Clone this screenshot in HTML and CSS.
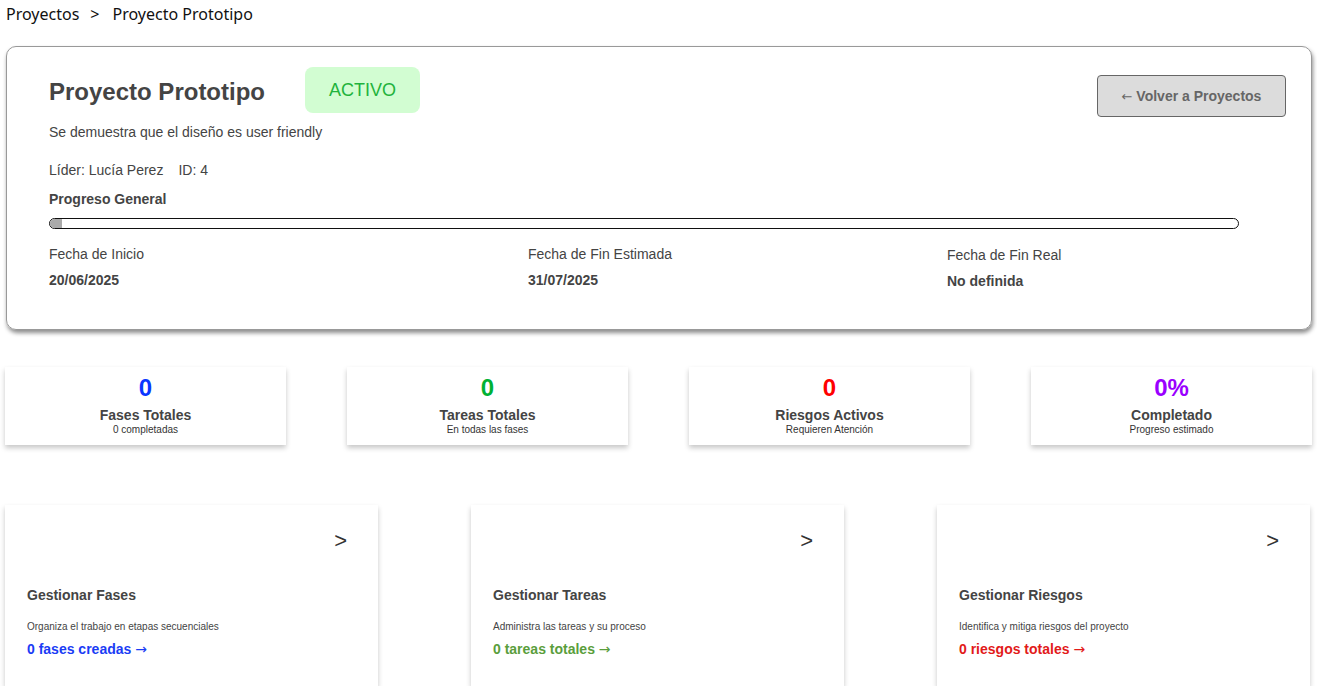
FILE: index.html
```html
<!DOCTYPE html>
<html lang="es">
<head>
<meta charset="utf-8">
<title>Proyecto Prototipo</title>
<link rel="stylesheet" href="styles.css">
</head>
<body>
<div class="page">
  <nav class="breadcrumb"><span>Proyectos</span><span class="sep">&gt;</span><span>Proyecto Prototipo</span></nav>

  <section class="project-card">
    <div class="header-row">
      <div class="title-group">
        <h1 class="title">Proyecto Prototipo</h1>
        <span class="badge">ACTIVO</span>
      </div>
      <button class="back-btn"><span class="arr">←</span> Volver a Proyectos</button>
    </div>
    <p class="desc">Se demuestra que el diseño es user friendly</p>
    <p class="meta"><span>Líder: Lucía Perez</span><span class="id">ID: 4</span></p>
    <p class="progress-label">Progreso General</p>
    <div class="progress"><div class="progress-fill" style="width: 1%"></div></div>
    <div class="dates">
      <div class="date-col">
        <div class="date-label">Fecha de Inicio</div>
        <div class="date-value">20/06/2025</div>
      </div>
      <div class="date-col">
        <div class="date-label">Fecha de Fin Estimada</div>
        <div class="date-value">31/07/2025</div>
      </div>
      <div class="date-col date-col-last">
        <div class="date-label">Fecha de Fin Real</div>
        <div class="date-value">No definida</div>
      </div>
    </div>
  </section>

  <section class="stats">
    <div class="stat">
      <div class="stat-num blue">0</div>
      <div class="stat-label">Fases Totales</div>
      <div class="stat-sub">0 completadas</div>
    </div>
    <div class="stat">
      <div class="stat-num green">0</div>
      <div class="stat-label">Tareas Totales</div>
      <div class="stat-sub">En todas las fases</div>
    </div>
    <div class="stat">
      <div class="stat-num red">0</div>
      <div class="stat-label">Riesgos Activos</div>
      <div class="stat-sub">Requieren Atención</div>
    </div>
    <div class="stat">
      <div class="stat-num purple">0%</div>
      <div class="stat-label">Completado</div>
      <div class="stat-sub">Progreso estimado</div>
    </div>
  </section>

  <section class="actions">
    <div class="action">
      <div class="action-arrow">&gt;</div>
      <div class="action-title">Gestionar Fases</div>
      <div class="action-desc">Organiza el trabajo en etapas secuenciales</div>
      <div class="action-link link-blue">0 fases creadas <span class="arr">→</span></div>
    </div>
    <div class="action">
      <div class="action-arrow">&gt;</div>
      <div class="action-title">Gestionar Tareas</div>
      <div class="action-desc">Administra las tareas y su proceso</div>
      <div class="action-link link-green">0 tareas totales <span class="arr">→</span></div>
    </div>
    <div class="action">
      <div class="action-arrow">&gt;</div>
      <div class="action-title">Gestionar Riesgos</div>
      <div class="action-desc">Identifica y mitiga riesgos del proyecto</div>
      <div class="action-link link-red">0 riesgos totales <span class="arr">→</span></div>
    </div>
  </section>
</div>
</body>
</html>
```

FILE: styles.css
```css
* { box-sizing: border-box; }

html, body {
  margin: 0;
  padding: 0;
  background: #fff;
}

body {
  font-family: "Liberation Sans", Arial, sans-serif;
  color: #444;
}

.page {
  padding: 0 5px 0 5px;
  width: 1317px;
}

.breadcrumb {
  font-family: "Noto Sans", "Open Sans", sans-serif;
  font-size: 16px;
  line-height: 22px;
  color: #111;
  padding: 3px 0 0 1px;
  height: 46px;
  display: flex;
}
.breadcrumb .sep { margin: 0 13px 0 11px; }

.project-card {
  margin-left: 1px;
  border: 1px solid #999;
  border-radius: 10px;
  box-shadow: 1px 3px 4px rgba(0, 0, 0, 0.45);
  padding: 20px 25px 40px 42px;
  height: 284px;
}

.header-row {
  display: flex;
  justify-content: space-between;
  align-items: flex-start;
}

.title-group {
  display: flex;
  align-items: center;
  height: 46px;
}

.title {
  margin: 4px 0 0 0;
  font-size: 24px;
  line-height: 28px;
  font-weight: bold;
  color: #444;
}

.badge {
  margin-left: 40px;
  background: #d2fdd2;
  color: #1fb33c;
  font-size: 18px;
  line-height: 22px;
  padding: 12px 24px;
  border-radius: 8px;
}

.back-btn {
  margin-top: 8px;
  width: 189px;
  height: 42px;
  background: #dcdcdc;
  border: 1px solid #666;
  border-radius: 4px;
  font-family: "Liberation Sans", Arial, sans-serif;
  font-size: 14px;
  font-weight: bold;
  color: #666;
  padding: 0;
}

.arr {
  font-family: "DejaVu Sans", sans-serif;
  font-weight: normal;
  font-size: 13px;
}

.desc, .meta, .progress-label {
  margin: 0;
  font-size: 14px;
  line-height: 16px;
}

.desc { margin-top: 7px; }
.meta { margin-top: 22px; }
.meta .id { margin-left: 15px; }
.progress-label { margin-top: 13px; font-weight: bold; }

.progress {
  margin-top: 11px;
  width: 1190px;
  height: 11px;
  border: 1.5px solid #111;
  border-radius: 6px;
  overflow: hidden;
  background: #fff;
}
.progress-fill {
  height: 100%;
  background: #aaa;
}

.dates {
  margin-top: 17px;
  display: grid;
  grid-template-columns: 479px 419px 1fr;
}
.date-label { font-size: 14px; line-height: 16px; }
.date-value { margin-top: 10px; font-size: 14px; line-height: 16px; font-weight: bold; }
.date-col-last { padding-top: 1px; }

.stats {
  margin-top: 37px;
  display: grid;
  grid-template-columns: repeat(4, 281px);
  column-gap: 61px;
}

.stat {
  height: 78px;
  background: #fff;
  box-shadow: 0 3px 5px rgba(0, 0, 0, 0.22);
  text-align: center;
  padding-top: 7px;
}
.stat-num {
  font-size: 24px;
  line-height: 28px;
  font-weight: bold;
}
.stat-label {
  margin-top: 5px;
  font-size: 14px;
  line-height: 16px;
  font-weight: bold;
  color: #444;
}
.stat-sub {
  margin-top: 1px;
  font-size: 10px;
  line-height: 12px;
  color: #333;
}
.blue { color: #0a36ff; }
.green { color: #00b134; }
.red { color: #ff0000; }
.purple { color: #9a00ff; }

.actions {
  margin-top: 60px;
  display: grid;
  grid-template-columns: repeat(3, 373px);
  column-gap: 93px;
}

.action {
  height: 181px;
  background: #fff;
  box-shadow: 0 3px 5px rgba(0, 0, 0, 0.22);
  padding: 24px 31px 0 22px;
}
.action-arrow {
  text-align: right;
  font-size: 22px;
  line-height: 24px;
  color: #333;
}
.action-title {
  margin-top: 34px;
  font-size: 14px;
  line-height: 16px;
  font-weight: bold;
  color: #444;
}
.action-desc {
  margin-top: 18px;
  font-size: 10px;
  line-height: 12px;
  color: #444;
}
.action-link {
  margin-top: 8px;
  font-size: 14px;
  line-height: 16px;
  font-weight: bold;
}
.action-link .arr { font-size: 14px; }
.link-blue { color: #1a3cf5; }
.link-green { color: #5a9e3c; }
.link-red { color: #e21a1a; }
```
